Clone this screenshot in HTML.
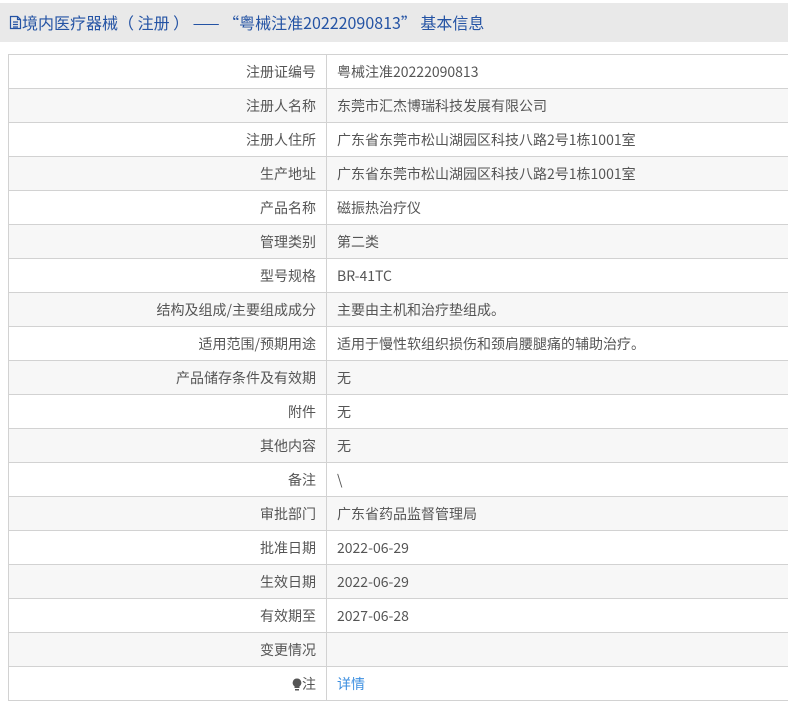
<!DOCTYPE html>
<html><head><meta charset="utf-8"><style>
body{margin:0;background:#fff;font-family:"Noto Sans CJK SC","Liberation Sans",sans-serif;width:788px;height:700px;overflow:hidden;position:relative}
.hd{position:absolute;top:3px;left:0;width:788px;height:39px;background:#e9e9e9;color:#2453a4;font-size:16px;line-height:39px;padding-left:9px;box-sizing:border-box;white-space:nowrap}
table{position:absolute;top:54px;left:8px;width:790px;border-collapse:collapse;font-size:14px;color:#555}
td{border:1px solid #d2d2d2;height:33px;padding:0 10px;white-space:nowrap;line-height:16px}
td.l{width:297px;text-align:right}
tr:nth-child(even) td{background:#f7f7f7}
a{color:#3d8fe0;text-decoration:none}
</style></head><body>
<div class="hd"><svg width="13" height="15" viewBox="0 0 13 14" style="vertical-align:-1px"><path d="M1.5 1h7l3 3v9h-10z M8.5 1v3h3 M4 6.5h5 M4 9h5 M4 11.5h5" fill="none" stroke="#2453a4" stroke-width="1.2"/></svg>境内医疗器械（ 注册 ） —— “粤械注准20222090813” 基本信息</div>
<table>
<tr><td class="l">注册证编号</td><td>粤械注准20222090813</td></tr>
<tr><td class="l">注册人名称</td><td>东莞市汇杰博瑞科技发展有限公司</td></tr>
<tr><td class="l">注册人住所</td><td>广东省东莞市松山湖园区科技八路2号1栋1001室</td></tr>
<tr><td class="l">生产地址</td><td>广东省东莞市松山湖园区科技八路2号1栋1001室</td></tr>
<tr><td class="l">产品名称</td><td>磁振热治疗仪</td></tr>
<tr><td class="l">管理类别</td><td>第二类</td></tr>
<tr><td class="l">型号规格</td><td>BR-41TC</td></tr>
<tr><td class="l">结构及组成/主要组成成分</td><td>主要由主机和治疗垫组成。</td></tr>
<tr><td class="l">适用范围/预期用途</td><td>适用于慢性软组织损伤和颈肩腰腿痛的辅助治疗。</td></tr>
<tr><td class="l">产品储存条件及有效期</td><td>无</td></tr>
<tr><td class="l">附件</td><td>无</td></tr>
<tr><td class="l">其他内容</td><td>无</td></tr>
<tr><td class="l">备注</td><td>\</td></tr>
<tr><td class="l">审批部门</td><td>广东省药品监督管理局</td></tr>
<tr><td class="l">批准日期</td><td>2022-06-29</td></tr>
<tr><td class="l">生效日期</td><td>2022-06-29</td></tr>
<tr><td class="l">有效期至</td><td>2027-06-28</td></tr>
<tr><td class="l">变更情况</td><td></td></tr>
<tr><td class="l"><svg width="10" height="13" viewBox="0 0 10 13" style="vertical-align:-2px"><path d="M5 0.5a4.3 4.3 0 0 0-2.5 7.8v1.7h5v-1.7A4.3 4.3 0 0 0 5 0.5z M3 11h4v1.5h-4z" fill="#555"/></svg>注</td><td><a>详情</a></td></tr>
</table>
</body></html>
